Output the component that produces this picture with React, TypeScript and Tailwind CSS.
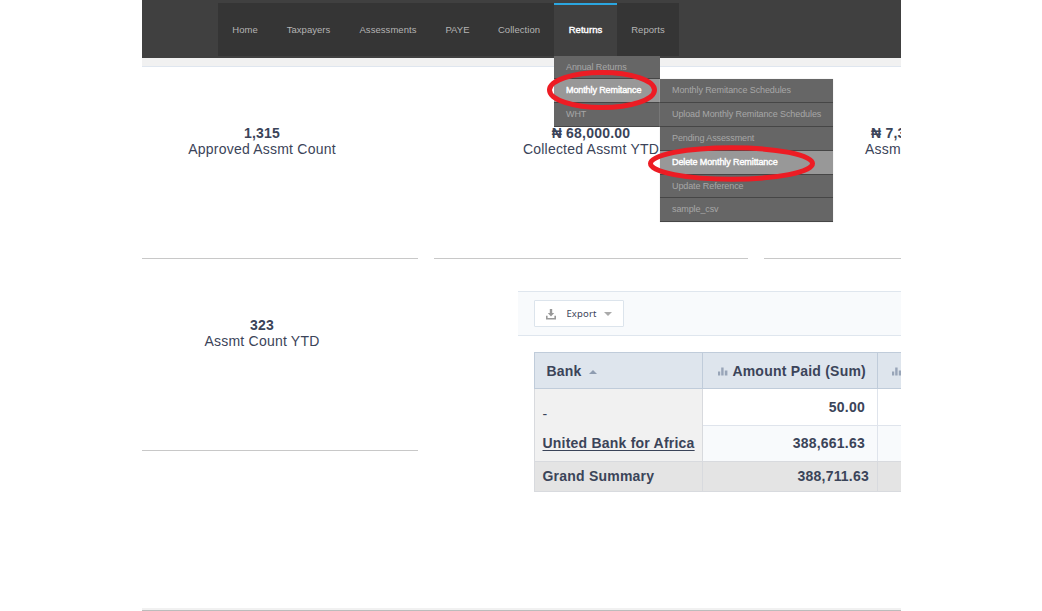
import React from "react";

const navItems = [
  { label: "Home", cls: "w-[54px] tracking-[0.05px]" },
  { label: "Taxpayers", cls: "w-[73px] tracking-[0.05px]" },
  { label: "Assessments", cls: "w-[86px] tracking-[0.05px]" },
  { label: "PAYE", cls: "w-[53px] tracking-[0.05px]" },
  { label: "Collection", cls: "w-[70px] tracking-[0.05px]" },
  { label: "Returns", cls: "w-[63px] tracking-[0.05px]", active: true },
  { label: "Reports", cls: "w-[62px] tracking-[0.05px]" },
];

const returnsMenu = [
  { label: "Annual Returns", cls: "h-[23px]" },
  { label: "Monthly Remitance", cls: "h-[24px]", active: true },
  { label: "WHT", cls: "h-[24px]" },
];

const remittanceMenu = [
  { label: "Monthly Remitance Schedules", cls: "h-[24px]" },
  { label: "Upload Monthly Remitance Schedules", cls: "h-[24px]" },
  { label: "Pending Assessment", cls: "h-[24px]" },
  { label: "Delete Monthly Remittance", cls: "h-[24px]", active: true },
  { label: "Update Reference", cls: "h-[23px]" },
  { label: "sample_csv", cls: "h-[24px]" },
];

type Item = { label: string; cls: string; active?: boolean };

function Menu({ items }: { items: Item[] }) {
  return (
    <ul>
      {items.map((i) => (
        <li
          key={i.label}
          className={`flex items-center whitespace-nowrap border-b border-[#464646] pl-3 text-[9px] leading-none tracking-[-0.1px] ${i.cls} ${
            i.active
              ? "bg-[#989898] text-white [-webkit-text-stroke:0.4px_white]"
              : "bg-[#666666] text-[#a6a6a6]"
          }`}
        >
          {i.label}
        </li>
      ))}
    </ul>
  );
}

function Stat({ value, label }: { value: string; label: string }) {
  return (
    <div className="whitespace-nowrap text-center text-[14px] leading-4 tracking-[0.22px]">
      <div className="font-bold">{value}</div>
      <div>{label}</div>
    </div>
  );
}

function Bars() {
  return (
    <svg className="mt-0.5 shrink-0" width="10" height="9" viewBox="0 0 10 9" fill="#98a5b8">
      <rect x="0" y="4.5" width="2.2" height="4" />
      <rect x="3.2" y="0.5" width="2.4" height="8" />
      <rect x="6.8" y="3.5" width="2.6" height="5" />
    </svg>
  );
}

export default function App() {
  return (
    <div className="h-[611px] w-[1042px] overflow-hidden bg-white font-['Liberation_Sans',Arial,sans-serif] text-[#3b4459]">
      <div className="relative ml-[142px] flex h-[611px] w-[759px] flex-col overflow-hidden">
        <header className="h-[58px] shrink-0 bg-[#404040] pl-[76px] pt-[3px]">
          <nav className="flex h-[53px] w-[461px] bg-[#353535]">
            {navItems.map((n) => (
              <div
                key={n.label}
                className={`flex items-center justify-center whitespace-nowrap text-[9.5px] leading-none ${n.cls} ${
                  n.active
                    ? "border-t-2 border-[#2ba6e0] bg-[#404040] pb-0.5 text-white [-webkit-text-stroke:0.4px_white]"
                    : "text-[#b4b4b4]"
                }`}
              >
                {n.label}
              </div>
            ))}
          </nav>
        </header>
        <div className="h-[9px] shrink-0 border-b border-[#dfe6ef] bg-[#f1f1f1]" />

        <section className="flex h-[192px] shrink-0 gap-4">
          <div className="w-[276px] shrink-0 border-b border-[#c8c8c8] pr-9 pt-[58px]">
            <Stat value="1,315" label="Approved Assmt Count" />
          </div>
          <div className="w-[314px] shrink-0 border-b border-[#c8c8c8] pt-[58px]">
            <Stat value="₦ 68,000.00" label="Collected Assmt YTD" />
          </div>
          <div className="w-[137px] shrink-0 overflow-hidden whitespace-nowrap border-b border-[#c8c8c8] pl-[101px] pt-[58px] text-[14px] leading-4 tracking-[0.22px]">
            <div className="pl-1.5 font-bold">₦ 7,3</div>
            <div>Assm</div>
          </div>
        </section>

        <section className="flex h-[349px] shrink-0">
          <div className="h-[192px] w-[276px] shrink-0 border-b border-[#c8c8c8] pr-9 pt-[58px]">
            <Stat value="323" label="Assmt Count YTD" />
          </div>
          <div className="ml-[100px] mt-8 w-[383px] overflow-hidden">
            <div className="h-[45px] border-y border-[#dfe6ee] bg-[#f8fafc] pl-4 pt-2">
              <button className="flex h-[27px] w-[90px] items-center rounded-[1px] border border-[#dce4ec] bg-white pl-[11px] font-['Noto_Sans',sans-serif] text-[9.5px] leading-none">
                <svg width="10" height="11" viewBox="0 0 10 11" className="mt-px">
                  <path d="M3.8 0h2.4v4h2L5 7.6 1.8 4h2z" fill="#999" />
                  <path d="M.8 6.8v3h8.4v-3" fill="none" stroke="#999" strokeWidth="1.6" />
                </svg>
                <span className="ml-[10px] w-[31px] tracking-[0.15px]">Export</span>
                <svg width="8" height="4" viewBox="0 0 8 4" className="ml-[7px]" fill="#aaa">
                  <path d="M0 0h8L4 4z" />
                </svg>
              </button>
            </div>

            <div className="ml-4 mt-4 flex h-[140px] w-[560px] text-[14px] font-bold leading-4 tracking-[0.22px]">
              <div className="w-[169px] shrink-0 border-r border-[#d8dade]">
                <div className="-mr-px flex h-[37px] items-center gap-[7px] border border-[#c0ccda] bg-[#dee5ed] pl-[11.5px]">
                  Bank
                  <svg width="8" height="4" viewBox="0 0 8 4" fill="#8e9cb0" className="mt-0.5">
                    <path d="M0 4h8L4 0z" />
                  </svg>
                </div>
                <div className="h-[72px] border-l border-[#d8dade] bg-[#f1f1f1] pl-[7.5px] pt-4">
                  <div className="pt-0.5 font-normal leading-[14px]">-</div>
                  <div className="mt-3.5 whitespace-nowrap underline underline-offset-2">United Bank for Africa</div>
                </div>
                <div className="flex h-[31px] items-center border border-r-0 border-[#d8dade] bg-[#e4e4e4] pb-px pl-[7.5px]">
                  Grand Summary
                </div>
              </div>
              <div className="w-[175px] shrink-0 border-r border-[#dfe4ec] text-right">
                <div className="-mr-px flex h-[37px] items-center justify-end gap-1 whitespace-nowrap border border-l-0 border-[#c0ccda] bg-[#dee5ed] pr-[11px]">
                  <Bars />
                  Amount Paid (Sum)
                </div>
                <div className="flex h-[37px] items-center justify-end border-b border-[#dfe4ec] pr-3">50.00</div>
                <div className="flex h-[35px] items-center justify-end bg-[#f8fafc] pb-px pr-3">388,661.63</div>
                <div className="-mr-px flex h-[31px] items-center justify-end border border-l-0 border-[#d8dade] bg-[#e4e4e4] pb-px pr-2">
                  388,711.63
                </div>
              </div>
              <div className="w-[100px] shrink-0">
                <div className="flex h-[37px] items-center border-y border-[#c0ccda] bg-[#dee5ed] pl-[14px]">
                  <Bars />
                </div>
                <div className="h-[37px] border-b border-[#dfe4ec]" />
                <div className="h-[35px] bg-[#f8fafc]" />
                <div className="h-[31px] border-y border-[#d8dade] bg-[#e4e4e4]" />
              </div>
            </div>
          </div>
        </section>
        <div className="h-[3px] shrink-0 border-b border-[#bcbcbc] bg-[#f1f1f1]" />

        <div className="absolute left-[412px] top-[56px] w-[106px]">
          <Menu items={returnsMenu} />
        </div>
        <div className="absolute left-[518px] top-[79px] w-[173px] shadow-[0_0_1px_#ccc]">
          <Menu items={remittanceMenu} />
        </div>
        <svg className="absolute left-0 top-0" width="759" height="200" fill="none" stroke="#ed1c24" strokeWidth="5">
          <ellipse cx="460" cy="90" rx="52.5" ry="17.5" />
          <ellipse cx="589.5" cy="163.5" rx="81" ry="15.7" />
        </svg>
      </div>
    </div>
  );
}
